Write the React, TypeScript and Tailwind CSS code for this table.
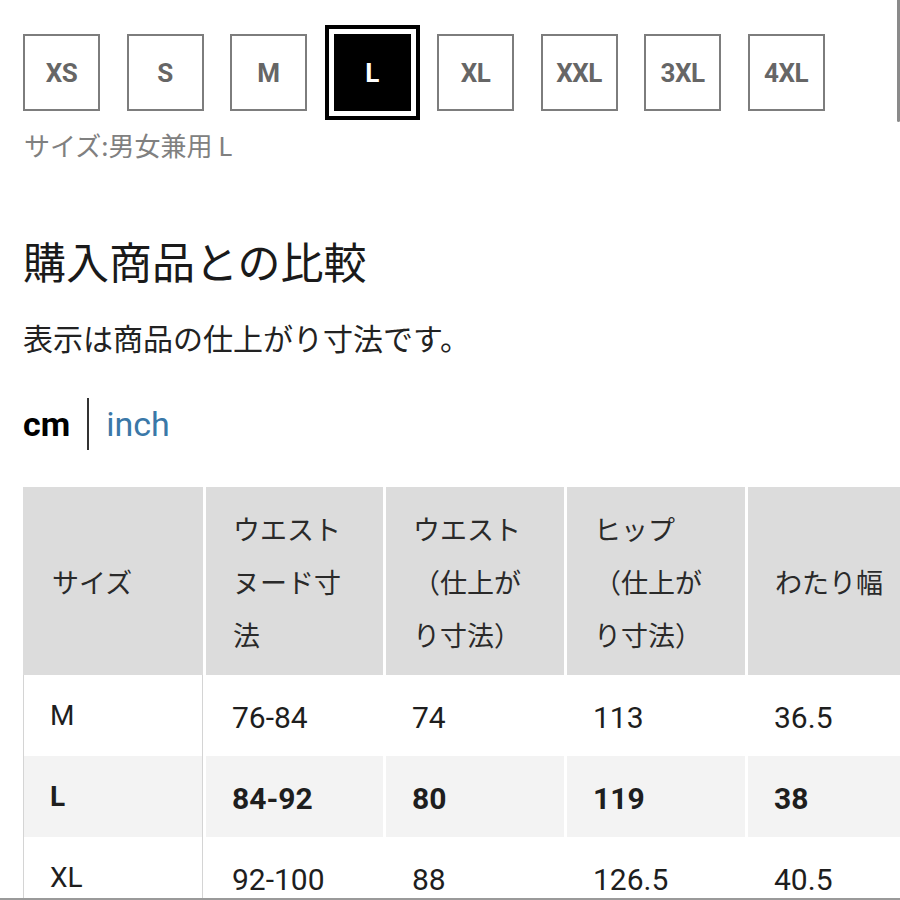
import React from "react";

const sizes = ["XS", "S", "M", "L", "XL", "XXL", "3XL", "4XL"];

const headers = [
  "サイズ",
  "ウエストヌード寸法",
  "ウエスト（仕上がり寸法）",
  "ヒップ（仕上がり寸法）",
  "わたり幅",
];

const rows = [
  { size: "M", values: ["76-84", "74", "113", "36.5"], current: false },
  { size: "L", values: ["84-92", "80", "119", "38"], current: true },
  { size: "XL", values: ["92-100", "88", "126.5", "40.5"], current: false },
];

function SizeButton({ label, selected }: { label: string; selected: boolean }) {
  return (
    <button
      className={
        selected
          ? "flex items-center justify-center w-[77px] h-[77px] shrink-0 bg-black border-2 border-black outline-4 outline-black outline-offset-[5px] text-white"
          : "flex items-center justify-center w-[77px] h-[77px] shrink-0 bg-white border-2 border-[#7d7d7d] text-[#666]"
      }
    >
      <span className="font-[Roboto,sans-serif] font-bold text-[26px] tracking-[-0.5px] leading-none">
        {label}
      </span>
    </button>
  );
}

export default function App() {
  return (
    <div className="relative w-[900px] h-[900px] overflow-hidden bg-white border-b-2 border-[#9a9a9a] font-['Noto_Sans_CJK_JP',sans-serif]">
      {/* scroll indicator */}
      <div className="absolute right-0 top-0 w-[3px] h-[122px] rounded-b bg-[#8a8a8a]" />

      <div className="flex gap-x-[26.5px] pl-[23px] pt-[34px]">
        {sizes.map((s) => (
          <SizeButton key={s} label={s} selected={s === "L"} />
        ))}
      </div>

      <p className="mt-[15px] pl-[24px] text-[26px] leading-[38px] text-[#808080]">
        サイズ:男女兼用 L
      </p>

      <h2 className="mt-[71px] pl-[23px] text-[43px] leading-[50px] text-[#1a1a1a]">
        購入商品との比較
      </h2>

      <p className="mt-[30px] pl-[23px] text-[30px] leading-[45px] text-[#222]">
        表示は商品の仕上がり寸法です。
      </p>

      <div className="mt-[38px] pl-[23px] flex items-center h-[52px] font-[Roboto,sans-serif] text-[34px]">
        <span className="font-bold text-black">cm</span>
        <span className="mx-[17px] w-[2px] h-[52px] bg-[#333]" />
        <span className="text-[#3a78a8]">inch</span>
      </div>

      <div className="mt-[37px] ml-[23px] grid w-max grid-cols-[180px_177px_178px_178px_178px] gap-x-[3px]">
        {headers.map((h, i) => (
          <div
            key={h}
            className={
              "flex items-center h-[188px] bg-[#dcdcdc] text-[27px] leading-[53px] text-[#2a2a2a] " +
              (i === 0 ? "pl-[29px] pr-[20px]" : "pl-[27px] pr-[27px]")
            }
          >
            <span>{h}</span>
          </div>
        ))}

        {rows.map((r) => (
          <React.Fragment key={r.size}>
            <div
              className={
                "flex items-center h-[81px] pl-[26px] border-x border-[#d4d4d4] font-[Roboto,sans-serif] text-[28px] text-[#1e1e1e] " +
                (r.current ? "bg-[#f3f3f3] font-bold" : "bg-white")
              }
            >
              {r.size}
            </div>
            {r.values.map((v, j) => (
              <div
                key={j}
                className={
                  "flex items-center h-[81px] pl-[26px] pt-[4px] font-[Roboto,sans-serif] text-[30px] text-[#1e1e1e] " +
                  (r.current ? "bg-[#f3f3f3] font-bold" : "bg-white")
                }
              >
                {v}
              </div>
            ))}
          </React.Fragment>
        ))}
      </div>
    </div>
  );
}
